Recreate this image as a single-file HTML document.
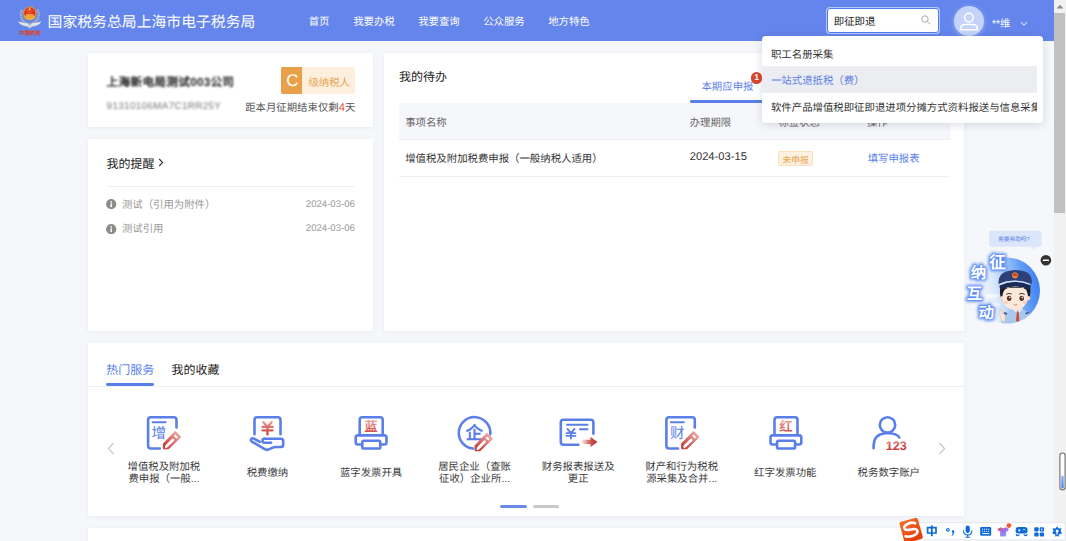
<!DOCTYPE html>
<html lang="zh-CN">
<head>
<meta charset="utf-8">
<title>国家税务总局上海市电子税务局</title>
<style>
*{box-sizing:border-box;margin:0;padding:0}
html,body{width:1066px;height:541px;overflow:hidden}
body{position:relative;text-rendering:geometricPrecision;background:#f5f7fa;font-family:"Liberation Sans",sans-serif;color:#333;font-size:10.4px;line-height:1}
.abs{position:absolute}
.t{position:absolute;white-space:nowrap;line-height:1}
#hdr{position:absolute;left:0;top:0;width:1053.6px;height:41px;background:#6485eb}
.card{position:absolute;background:#fff;border-radius:1px;box-shadow:0 1px 4px rgba(120,130,160,.10)}
#search{position:absolute;left:827px;top:7.5px;width:112.4px;height:25.6px;background:#fff;border:1.6px solid #4d7cf0;border-radius:3px;box-shadow:0 0 0 1px rgba(190,208,255,.9)}
#dd{position:absolute;left:761.6px;top:36.4px;width:281px;height:86.2px;background:#fff;border-radius:3.5px;box-shadow:0 2px 8px rgba(40,50,80,.16)}
#dd .it{position:absolute;left:0;width:275.6px;height:26.1px;line-height:32px;padding-left:9.4px;font-size:10.4px;color:#333;white-space:nowrap;overflow:hidden}
#sb{position:absolute;left:1053.6px;top:0;width:12.4px;height:541px;background:#f1f1f1}
#sb .thumb{position:absolute;left:0.4px;top:13px;width:11px;height:200px;background:#c1c1c1}
.svc{position:absolute;width:104px;text-align:center;font-size:10.4px;color:#3c3c3c;line-height:11.6px}

</style>
</head>
<body>
<div id="hdr">
<div class="t " style="left:47.6px;top:16.24px;font-size:14.85px;color:#fff;font-weight:500">国家税务总局上海市电子税务局</div>
<div class="t " style="left:308.7px;top:18.48px;font-size:10.4px;color:#fff;">首页</div>
<div class="t " style="left:353.2px;top:18.48px;font-size:10.4px;color:#fff;">我要办税</div>
<div class="t " style="left:418.2px;top:18.48px;font-size:10.4px;color:#fff;">我要查询</div>
<div class="t " style="left:483.2px;top:18.48px;font-size:10.4px;color:#fff;">公众服务</div>
<div class="t " style="left:548.2px;top:18.48px;font-size:10.4px;color:#fff;">地方特色</div>
<div id="search">
<div class="t " style="left:5.8px;top:9.78px;font-size:10.4px;color:#222;">即征即退</div>
<svg class="abs" style="left:91.6px;top:5.4px" width="12" height="12" viewBox="0 0 12 12"><circle cx="5" cy="5" r="3.2" fill="none" stroke="#a9adb6" stroke-width="1"/><path d="M7.4 7.4 L10 10" stroke="#a9adb6" stroke-width="1" stroke-linecap="round"/></svg>
</div>
<div class="abs" style="left:954.2px;top:6.2px;width:30px;height:30px;border-radius:50%;background:#c3d3f9;box-shadow:0 1px 5px rgba(225,235,255,.45)"></div>
<svg class="abs" style="left:954.2px;top:6.2px" width="30" height="30" viewBox="0 0 30 30"><circle cx="15" cy="11.6" r="4.3" fill="none" stroke="#fff" stroke-width="1.5"/><path d="M6.6 23.8 v-1.2 a4.2 4.2 0 0 1 4.2 -4.2 h8.4 a4.2 4.2 0 0 1 4.2 4.2 v1.2 z" fill="none" stroke="#fff" stroke-width="1.5" stroke-linejoin="round"/></svg>
<div class="t " style="left:992px;top:19.88px;font-size:10.4px;color:#fff;">**维</div>
<svg class="abs" style="left:1020px;top:20.5px" width="8" height="6" viewBox="0 0 8 6"><path d="M1 1.2 L4 4.2 L7 1.2" fill="none" stroke="#fff" stroke-width="1"/></svg>
</div>
<div class="card" id="c1" style="left:88.4px;top:53.2px;width:284.3px;height:74px">
<div class="t " style="left:18.2px;top:23.99px;font-size:11.7px;color:#222;font-weight:700;filter:blur(0.95px);letter-spacing:0.25px">上海新电局测试003公司</div>
<div class="t " style="left:18.2px;top:48.90px;font-size:9.8px;color:#777;filter:blur(0.9px);letter-spacing:0.38px">91310106MA7C1RR25Y</div>
<div class="abs" style="left:193.1px;top:14.1px;width:73.8px;height:26.5px;background:#fcefdd;border-radius:2px"></div>
<div class="abs" style="left:193.1px;top:14.1px;width:20.8px;height:26.5px;background:#e9a149;border-radius:2px 0 0 2px"></div>
<div class="t " style="left:197.8px;top:19.02px;font-size:17px;color:#fff;">C</div>
<div class="t " style="left:220px;top:25.38px;font-size:10.4px;color:#e8a34c;">级纳税人</div>
<div class="t " style="right:17.4px;top:49.68px;font-size:10.4px;color:#555;">距本月征期结束仅剩<span style="color:#e5533d;font-size:11.2px">4</span>天</div>
</div>
<div class="card" id="c2" style="left:88.4px;top:139px;width:284.3px;height:192px">
<div class="t " style="left:18.2px;top:19.20px;font-size:12px;color:#222;">我的提醒</div>
<svg class="abs" style="left:69.2px;top:19.2px" width="6" height="9" viewBox="0 0 6 9"><path d="M1.2 1 L4.6 4.5 L1.2 8" fill="none" stroke="#333" stroke-width="1.1"/></svg>
<div class="abs" style="left:18.2px;top:47px;width:248.3px;height:1px;background:#eef0f4"></div>
<svg class="abs" style="left:18px;top:60.39999999999999px" width="10.4" height="10.4" viewBox="0 0 10 10"><circle cx="5" cy="5" r="4.9" fill="#8c8c8c"/><circle cx="5" cy="2.8" r="0.8" fill="#fff"/><rect x="4.3" y="4.2" width="1.4" height="3.6" fill="#fff"/></svg>
<div class="t " style="left:33.5px;top:62.28px;font-size:10.4px;color:#999;">测试（引用为附件）</div>
<div class="t " style="right:17.8px;top:61.20px;font-size:9.6px;color:#999;">2024-03-06</div>
<svg class="abs" style="left:18px;top:84.49999999999999px" width="10.4" height="10.4" viewBox="0 0 10 10"><circle cx="5" cy="5" r="4.9" fill="#8c8c8c"/><circle cx="5" cy="2.8" r="0.8" fill="#fff"/><rect x="4.3" y="4.2" width="1.4" height="3.6" fill="#fff"/></svg>
<div class="t " style="left:33.5px;top:86.38px;font-size:10.4px;color:#999;">测试引用</div>
<div class="t " style="right:17.8px;top:85.30px;font-size:9.6px;color:#999;">2024-03-06</div>
</div>
<div class="card" id="c3" style="left:384.2px;top:53.2px;width:580.2px;height:277.8px">
<div class="t " style="left:14.8px;top:17.40px;font-size:12px;color:#222;">我的待办</div>
<div class="t " style="left:317.3px;top:30.08px;font-size:10.4px;color:#5b7fe8;">本期应申报</div>
<div class="abs" style="left:305.5px;top:47.3px;width:110px;height:2.9px;background:#5b7fe8;border-radius:1.3px"></div>
<div class="abs" style="left:366.6px;top:19px;width:11.6px;height:11.6px;border-radius:50%;background:#d8452f;color:#fff;font-size:8.6px;font-weight:700;text-align:center;line-height:11.6px">1</div>
<div class="abs" style="left:14.8px;top:50.1px;width:551px;height:36.1px;background:#f6f7fb"></div>
<div class="t " style="left:21px;top:66.28px;font-size:10.4px;color:#666;">事项名称</div>
<div class="t " style="left:305.5px;top:66.28px;font-size:10.4px;color:#666;">办理期限</div>
<div class="t " style="left:394.2px;top:66.28px;font-size:10.4px;color:#666;">标签状态</div>
<div class="t " style="left:482.8px;top:66.28px;font-size:10.4px;color:#666;">操作</div>
<div class="abs" style="left:14.8px;top:86.2px;width:551px;height:1px;background:#eef0f4"></div>
<div class="t " style="left:21px;top:101.68px;font-size:10.4px;color:#333;">增值税及附加税费申报（一般纳税人适用）</div>
<div class="t " style="left:305.5px;top:99.31px;font-size:11.2px;color:#333;">2024-03-15</div>
<div class="abs" style="left:394.2px;top:97.9px;width:34.3px;height:14.7px;background:#fdf1e1;border:1px solid #f9dfba;border-radius:1.5px"></div>
<div class="t " style="left:398.2px;top:102.56px;font-size:8.8px;color:#e9a04a;">未申报</div>
<div class="t " style="left:483.5px;top:102.18px;font-size:10.4px;color:#5b7fe8;">填写申报表</div>
<div class="abs" style="left:14.8px;top:123.3px;width:551px;height:1px;background:#eef0f4"></div>
</div>
<div class="card" id="c4" style="left:88.4px;top:343.4px;width:876px;height:172.4px">
<div class="t " style="left:17.799999999999997px;top:20.90px;font-size:12px;color:#5b7fe8;">热门服务</div>
<div class="t " style="left:83.1px;top:20.90px;font-size:12px;color:#222;">我的收藏</div>
<div class="abs" style="left:17.799999999999997px;top:39.400000000000034px;width:47.6px;height:2.8px;border-radius:1.4px;background:#5b7fe8"></div>
<div class="abs" style="left:0;top:42.400000000000034px;width:876px;height:1px;background:#eef0f4"></div>
<svg class="abs" style="left:19.0px;top:98.20000000000005px" width="8" height="13" viewBox="0 0 8 13"><path d="M6.6 1 L1.4 6.5 L6.6 12" fill="none" stroke="#c4c6cc" stroke-width="1.1"/></svg>
<svg class="abs" style="left:850.0px;top:98.20000000000005px" width="8" height="13" viewBox="0 0 8 13"><path d="M1.4 1 L6.6 6.5 L1.4 12" fill="none" stroke="#c4c6cc" stroke-width="1.1"/></svg>
<svg class="abs" style="left:0;top:56.60px" width="876" height="60" viewBox="88.4 400 876 60"><defs><linearGradient id="pg" gradientUnits="userSpaceOnUse" x1="17" y1="-17" x2="1" y2="-1"><stop offset="0" stop-color="#eeb4ae"/><stop offset="0.55" stop-color="#d66a66"/><stop offset="1" stop-color="#c23633"/></linearGradient><linearGradient id="rv" gradientUnits="userSpaceOnUse" x1="0" y1="420" x2="0" y2="450"><stop offset="0" stop-color="#e9a8a4"/><stop offset="0.25" stop-color="#d96c68"/><stop offset="0.6" stop-color="#c6312f"/><stop offset="1" stop-color="#c6393a"/></linearGradient><linearGradient id="ag" gradientUnits="userSpaceOnUse" x1="581" y1="0" x2="597" y2="0"><stop offset="0" stop-color="#e08a86" stop-opacity="0.12"/><stop offset="0.5" stop-color="#cf4d4a" stop-opacity="0.85"/><stop offset="1" stop-color="#b92524"/></linearGradient><linearGradient id="rn" gradientUnits="userSpaceOnUse" x1="0" y1="440" x2="0" y2="450"><stop offset="0" stop-color="#e39a96"/><stop offset="0.5" stop-color="#cf4b48"/><stop offset="1" stop-color="#c5383a"/></linearGradient></defs><g transform="translate(0,0)"><path d="M176.9 427.6 V419.9 Q176.9 417.2 174.2 417.2 H151.2 Q148.5 417.2 148.5 419.9 V445.8 Q148.5 448.5 151.2 448.5 H160.2" fill="none" stroke="#5b7fe8" stroke-width="2.6" stroke-linecap="round"/><path d="M153 422.2 H166" stroke="#5b7fe8" stroke-width="1.9" fill="none" stroke-linecap="round"/><text x="159.3" y="437.90" font-size="14.6" font-weight="500" fill="#5b7fe8" text-anchor="middle" font-family="Liberation Sans, sans-serif">增</text><g transform="translate(163.2,449.4)"><path d="M0.6 -0.6 L5.8 -0.6 L18.1 -12.5 L12.5 -18.1 L0.6 -5.8 Z" fill="url(#pg)" stroke="url(#pg)" stroke-width="1" stroke-linejoin="round"/><path d="M4.3 -3.7 L10.1 -9.5" stroke="#fff" stroke-width="2.8" fill="none" stroke-linecap="round"/><path d="M3.2 -2.4 L5 -4.4" stroke="#fff" stroke-width="2.2" fill="none" stroke-linecap="round"/><path d="M12.3 -13.6 L13.9 -12" stroke="#fff" stroke-width="2" fill="none" stroke-linecap="round"/></g></g><g transform="translate(0.3,0)"><path d="M254.6 434.2 V419.9 Q254.6 417.2 257.3 417.2 H277.9 Q280.6 417.2 280.6 419.9 V434.2" fill="none" stroke="#5b7fe8" stroke-width="2.6" stroke-linecap="round"/><path d="M263.52 422.2 L267.6 426.9 L271.68 422.2 M267.6 426.9 V434.6 M262.5 426.9 H272.70000000000005 M262.5 430.3 H272.70000000000005" fill="none" stroke="url(#rv)" stroke-width="2.3" stroke-linecap="round" stroke-linejoin="round"/><path d="M264.8 438.7 H281 Q283.3 438.7 283.3 441 V444.7 Q283.3 447 281 447 H275.6 Q274.2 447 272.8 447.6 L268.4 449.6 Q266.6 450.2 264.8 449.2 L252 441.6 Q250.4 440.4 251.4 439 Q252.4 437.8 254 438.6 L260 441.9" fill="none" stroke="#5b7fe8" stroke-width="2.6" stroke-linecap="round" stroke-linejoin="round"/><path d="M264.8 438.7 Q262.6 438.7 262.6 440.7 Q262.6 442.7 264.8 442.7 H271.2" fill="none" stroke="#5b7fe8" stroke-width="2.6" stroke-linecap="round" stroke-linejoin="round"/></g><g transform="translate(0.3,0)"><path d="M359.8 435.4 V419.7 Q359.8 417.2 362.3 417.2 H380.3 Q382.8 417.2 382.8 419.7 V435.4" fill="none" stroke="#5b7fe8" stroke-width="2.6"/><path d="M362.4 444.5 H358 Q355.8 444.5 355.8 442.3 V437.6 Q355.8 435.4 358 435.4 H384.4 Q386.6 435.4 386.6 437.6 V442.3 Q386.6 444.5 384.4 444.5 H380.4" fill="none" stroke="#5b7fe8" stroke-width="2.6"/><rect x="362.4" y="440.7" width="18" height="7.8" rx="1.6" fill="#fff" stroke="#5b7fe8" stroke-width="2.6"/><text x="371.2" y="431.31" font-size="13" font-weight="700" fill="url(#rv)" text-anchor="middle" font-family="Liberation Sans, sans-serif">蓝</text></g><path d="M490.7 434.4 A15.8 15.8 0 1 0 473.4 448.6" fill="none" stroke="#5b7fe8" stroke-width="2.5" stroke-linecap="round"/><text x="474.7" y="438.68" font-size="17.5" font-weight="700" fill="#5b7fe8" text-anchor="middle" font-family="Liberation Sans, sans-serif">企</text><g transform="translate(474.9,451.3)"><path d="M0.6 -0.6 L5.8 -0.6 L18.1 -12.5 L12.5 -18.1 L0.6 -5.8 Z" fill="url(#pg)" stroke="url(#pg)" stroke-width="1" stroke-linejoin="round"/><path d="M4.3 -3.7 L10.1 -9.5" stroke="#fff" stroke-width="2.8" fill="none" stroke-linecap="round"/><path d="M3.2 -2.4 L5 -4.4" stroke="#fff" stroke-width="2.2" fill="none" stroke-linecap="round"/><path d="M12.3 -13.6 L13.9 -12" stroke="#fff" stroke-width="2" fill="none" stroke-linecap="round"/></g><g transform="translate(0.4,0)"><path d="M593.4 433.8 V422.4 Q593.4 419.7 590.7 419.7 H563.5 Q560.8 419.7 560.8 422.4 V442 Q560.8 444.7 563.5 444.7 H578.4" fill="none" stroke="#5b7fe8" stroke-width="2.6" stroke-linecap="round"/><path d="M567 424.7 H587.6 M579.9 429.3 H587.6" stroke="#5b7fe8" stroke-width="1.9" fill="none" stroke-linecap="round"/><path d="M567.48 428.9 L571 433.1 L574.52 428.9 M571 433.1 V438.6 M566.6 433.1 H575.4 M566.6 435.9 H575.4" fill="none" stroke="#5b7fe8" stroke-width="1.9" stroke-linecap="round" stroke-linejoin="round"/><path d="M581.9 439.7 H590.4 V436.8 L597.4 441.9 L590.4 447.3 V444.1 H581.9 Z" fill="url(#ag)"/></g><g transform="translate(518.3,0)"><path d="M176.9 427.6 V419.9 Q176.9 417.2 174.2 417.2 H151.2 Q148.5 417.2 148.5 419.9 V445.8 Q148.5 448.5 151.2 448.5 H160.2" fill="none" stroke="#5b7fe8" stroke-width="2.6" stroke-linecap="round"/><path d="M153 422.2 H166" stroke="#5b7fe8" stroke-width="1.9" fill="none" stroke-linecap="round"/><text x="159.3" y="437.90" font-size="14.6" font-weight="500" fill="#5b7fe8" text-anchor="middle" font-family="Liberation Sans, sans-serif">财</text><g transform="translate(163.2,449.4)"><path d="M0.6 -0.6 L5.8 -0.6 L18.1 -12.5 L12.5 -18.1 L0.6 -5.8 Z" fill="url(#pg)" stroke="url(#pg)" stroke-width="1" stroke-linejoin="round"/><path d="M4.3 -3.7 L10.1 -9.5" stroke="#fff" stroke-width="2.8" fill="none" stroke-linecap="round"/><path d="M3.2 -2.4 L5 -4.4" stroke="#fff" stroke-width="2.2" fill="none" stroke-linecap="round"/><path d="M12.3 -13.6 L13.9 -12" stroke="#fff" stroke-width="2" fill="none" stroke-linecap="round"/></g></g><g transform="translate(415.1,0)"><path d="M359.8 435.4 V419.7 Q359.8 417.2 362.3 417.2 H380.3 Q382.8 417.2 382.8 419.7 V435.4" fill="none" stroke="#5b7fe8" stroke-width="2.6"/><path d="M362.4 444.5 H358 Q355.8 444.5 355.8 442.3 V437.6 Q355.8 435.4 358 435.4 H384.4 Q386.6 435.4 386.6 437.6 V442.3 Q386.6 444.5 384.4 444.5 H380.4" fill="none" stroke="#5b7fe8" stroke-width="2.6"/><rect x="362.4" y="440.7" width="18" height="7.8" rx="1.6" fill="#fff" stroke="#5b7fe8" stroke-width="2.6"/><text x="371.2" y="431.31" font-size="13" font-weight="700" fill="url(#rv)" text-anchor="middle" font-family="Liberation Sans, sans-serif">红</text></g><g transform="translate(0.4,0)"><circle cx="887.5" cy="424.9" r="7.7" fill="none" stroke="#5b7fe8" stroke-width="2.6"/><path d="M873.6 448.2 V446 Q873.9 434 885.5 433.3 H889 Q896.6 433.6 899.4 437.4" fill="none" stroke="#5b7fe8" stroke-width="2.6" stroke-linecap="round"/><text x="896.2" y="449.7" font-size="12.5" font-weight="700" fill="url(#rn)" text-anchor="middle" font-family="Liberation Sans, sans-serif">123</text></g></svg>
<div class="svc" style="left:23.50px;top:118.80px">增值税及附加税<br>费申报（一般...</div>
<div class="svc" style="left:127.10px;top:124.50px">税费缴纳</div>
<div class="svc" style="left:230.70px;top:124.50px">蓝字发票开具</div>
<div class="svc" style="left:334.20px;top:118.80px">居民企业（查账<br>征收）企业所...</div>
<div class="svc" style="left:437.80px;top:118.80px">财务报表报送及<br>更正</div>
<div class="svc" style="left:541.30px;top:118.80px">财产和行为税税<br>源采集及合并...</div>
<div class="svc" style="left:644.90px;top:124.50px">红字发票功能</div>
<div class="svc" style="left:748.40px;top:124.50px">税务数字账户</div>
<div class="abs" style="left:411.70000000000005px;top:161.5px;width:26.7px;height:3.3px;border-radius:1.7px;background:#6a8bea"></div>
<div class="abs" style="left:444.4px;top:161.5px;width:26.4px;height:3.3px;border-radius:1.7px;background:#c8c8c8"></div>
</div>
<div class="card" id="c5" style="left:88.4px;top:527.8px;width:876px;height:40px"></div>
<svg class="abs" style="left:14px;top:0" width="32" height="41" viewBox="14 0 32 41"><defs><radialGradient id="lgR" cx="0.45" cy="0.35" r="0.7"><stop offset="0" stop-color="#f0452e"/><stop offset="1" stop-color="#c81e1a"/></radialGradient><linearGradient id="lgS" x1="0" y1="0" x2="0" y2="1"><stop offset="0" stop-color="#ffffff"/><stop offset="1" stop-color="#b9c0cf"/></linearGradient></defs><path d="M22 9.8 Q19.8 15.4 22.4 20 Q25 23.6 29.8 24.2 Q34.6 23.6 37.2 20 Q39.8 15.4 37.6 9.8" fill="none" stroke="#aeb6c8" stroke-width="2.4" stroke-dasharray="1.6 0.7" opacity="0.95"/><path d="M22.6 11 Q21 15.4 23.2 19.2 Q25.6 22.4 29.8 22.8 Q34 22.4 36.4 19.2 Q38.6 15.4 37 11" fill="none" stroke="#8e97ab" stroke-width="0.8" opacity="0.8"/><path d="M18.2 21.6 Q24 23.4 27.4 23.2 L29.8 25.2 L32.2 23.2 Q35.6 23.4 41.4 21.6 Q38.6 26.2 32.6 26.6 L29.8 28.4 L27 26.6 Q21 26.2 18.2 21.6 Z" fill="url(#lgS)" stroke="#aab2c4" stroke-width="0.3"/><circle cx="29.8" cy="13" r="6.1" fill="url(#lgR)" stroke="#f09a2c" stroke-width="1"/><path d="M24.6 15.6 H35 V18.2 Q32.6 19.9 29.8 19.9 Q27 19.9 24.6 18.2 Z" fill="#f5b232"/><path d="M25.6 15.6 L26.6 14.2 H33 L34 15.6 Z" fill="#f8c646"/><path d="M25.4 17.1 H34.2" stroke="#e07a20" stroke-width="0.5"/><circle cx="29.6" cy="9.3" r="0.95" fill="#ffd95a"/><circle cx="27.2" cy="10.8" r="0.45" fill="#ffd95a"/><circle cx="32" cy="10.8" r="0.45" fill="#ffd95a"/><circle cx="28.2" cy="12.6" r="0.4" fill="#ffd95a"/><circle cx="31" cy="12.6" r="0.4" fill="#ffd95a"/><text x="30.1" y="35.2" font-size="5.5" font-weight="700" fill="#d6452d" text-anchor="middle" font-family="Liberation Serif, serif" letter-spacing="-0.1">中国税务</text></svg>
<div id="dd">
<div class="it" style="top:3.6px">职工名册采集</div>
<div class="it" style="top:30.1px;background:#ecedf1;color:#5b7fe8">一站式退抵税（费）</div>
<div class="it" style="top:56.8px">软件产品增值税即征即退进项分摊方式资料报送与信息采集</div>
</div>
<div id="sb"><div class="thumb"></div><svg class="abs" style="left:2px;top:3.6px" width="8" height="5" viewBox="0 0 8 5"><path d="M0.6 4.4 L4 0.8 L7.4 4.4 Z" fill="#8a8a8a"/></svg></div>
<svg class="abs" style="left:960px;top:225px;overflow:visible" width="96" height="105" viewBox="960 225 96 105"><defs><linearGradient id="mc" gradientUnits="userSpaceOnUse" x1="1041" y1="284" x2="972" y2="298"><stop offset="0" stop-color="#3d7df0"/><stop offset="0.22" stop-color="#5f9af4"/><stop offset="0.45" stop-color="#9cc3f9" stop-opacity="0.95"/><stop offset="0.68" stop-color="#cfe2fc" stop-opacity="0.6"/><stop offset="1" stop-color="#e6f0fe" stop-opacity="0"/></linearGradient><filter id="gb" x="-40%" y="-40%" width="180%" height="180%"><feGaussianBlur stdDeviation="1.5"/></filter><clipPath id="mclip"><circle cx="1007" cy="290.6" r="33"/></clipPath></defs><rect x="989.1" y="230.8" width="52.4" height="15.9" rx="2.6" fill="#dbe6fb"/><path d="M1031.2 246.5 L1033.9 250.3 L1035.2 246.5 Z" fill="#dbe6fb"/><text x="1013.9" y="241.2" font-size="5.7" fill="#5b7fe6" text-anchor="middle" font-family="Liberation Sans, sans-serif">需要帮助吗?</text><circle cx="1045.9" cy="260.3" r="5.3" fill="#333"/><rect x="1042.8" y="259.5" width="6.2" height="1.6" rx="0.6" fill="#fff"/><circle cx="1007" cy="290.6" r="33" fill="url(#mc)"/><g clip-path="url(#mclip)"><ellipse cx="992" cy="296" rx="7" ry="2.6" fill="#fff" opacity="0.55"/><ellipse cx="996" cy="304.6" rx="4" ry="1.8" fill="#fff" opacity="0.5"/><g transform="translate(0,1.8)"><path d="M1001 322 Q1002 310.5 1010 308.6 L1015 306 H1020 L1025 308.6 Q1031 310.5 1032 322 Z" fill="#a9c8ef"/><path d="M1012 306.6 L1016.6 311.4 L1017.6 306 Z M1023 306.6 L1018.6 311.4 L1017.6 306 Z" fill="#eef5fd"/><path d="M1016.8 309.6 H1018.6 L1019.3 318.5 L1017.7 321 L1016.1 318.5 Z" fill="#d8482f"/><path d="M1004 311 l3 1.2 M1028.6 310.6 l-3 1.4" stroke="#35508e" stroke-width="1.6"/><path d="M1001 318 Q999 312 1000 307.6 Q1000.6 306.6 1001.4 307.6 L1002.4 311.6 Q1005.6 312.4 1005.4 316 L1004.4 321 Z" fill="#fbe5d6" stroke="#c9a893" stroke-width="0.4"/></g></g><g transform="translate(0,1.5) translate(1015,296) scale(1.08) translate(-1015,-296)"><rect x="1014.4" y="303" width="6.4" height="5" fill="#f6d7c3"/><path d="M1002.6 291 Q1002 303.6 1010.4 306.4 Q1015 308 1019.6 306.4 Q1028 303.6 1027.6 291 Q1026 284.6 1015 284.6 Q1004 284.6 1002.6 291 Z" fill="#fde9dc"/><path d="M1001.4 287 Q1000.2 294 1003 299.2 Q1003 292 1005.6 288.6 L1010 286.2 L1021 286.2 L1025.4 288.8 Q1027.4 292.6 1027.4 298.6 Q1030 293 1029 287 Z" fill="#1d1d26"/><ellipse cx="1002.6" cy="296.6" rx="1.3" ry="2" fill="#fbdcca"/><ellipse cx="1027.8" cy="296.6" rx="1.3" ry="2" fill="#fbdcca"/><ellipse cx="1009.6" cy="296.8" rx="2.1" ry="2.5" fill="#5a3526"/><ellipse cx="1021.2" cy="296.8" rx="2.1" ry="2.5" fill="#5a3526"/><circle cx="1010.2" cy="296" r="0.75" fill="#fff"/><circle cx="1021.8" cy="296" r="0.75" fill="#fff"/><path d="M1006.8 293 Q1009.4 291.6 1012 292.8 M1018.8 292.8 Q1021.4 291.6 1024 293" stroke="#1d1d26" stroke-width="0.8" fill="none"/><ellipse cx="1006.6" cy="300.6" rx="1.9" ry="1.1" fill="#f7b9a6" opacity="0.7"/><ellipse cx="1024.2" cy="300.6" rx="1.9" ry="1.1" fill="#f7b9a6" opacity="0.7"/><path d="M1013.8 302.4 Q1015.4 303.8 1017 302.4" stroke="#b5553f" stroke-width="0.6" fill="none"/></g><path d="M998.6 284 Q997.6 274.6 1006 271.6 Q1015.4 268.6 1025 271.6 Q1033 274.6 1031.6 284 Q1024 280.6 1015 280.6 Q1006 280.6 998.6 284 Z" fill="#2d4178"/><path d="M999.6 285.4 Q1015 278.6 1030.6 285.4 Q1031 288.2 1029.4 289.6 Q1015 283.6 1000.8 289.6 Q999.2 288.2 999.6 285.4 Z" fill="#1c2a55"/><path d="M1000.4 284.2 Q1015 278 1029.8 284.2" stroke="#e8ecf4" stroke-width="1" fill="none"/><circle cx="1015" cy="275.4" r="2.7" fill="#d93a2a" stroke="#f0b13a" stroke-width="0.7"/><path d="M1013.6 276.4 h2.8 v0.9 h-2.8 z" fill="#f6c13f"/><text x="997.4" y="267.7" font-size="16.5" font-weight="700" text-anchor="middle" fill="#fff" stroke="#3f74f5" stroke-width="3.4" stroke-linejoin="round" opacity="0.8" filter="url(#gb)" font-family="Liberation Sans, sans-serif">征</text><text x="997.4" y="267.7" font-size="16.5" font-weight="700" text-anchor="middle" fill="#fff" stroke="#5b8bf8" stroke-width="1.3" stroke-linejoin="round" opacity="0.95" font-family="Liberation Sans, sans-serif">征</text><text x="997.4" y="267.7" font-size="16.5" font-weight="700" text-anchor="middle" fill="#fff" font-family="Liberation Sans, sans-serif">征</text><text x="978.6" y="278.1" font-size="15.5" font-weight="700" text-anchor="middle" fill="#fff" stroke="#3f74f5" stroke-width="3.4" stroke-linejoin="round" opacity="0.8" filter="url(#gb)" font-family="Liberation Sans, sans-serif">纳</text><text x="978.6" y="278.1" font-size="15.5" font-weight="700" text-anchor="middle" fill="#fff" stroke="#5b8bf8" stroke-width="1.3" stroke-linejoin="round" opacity="0.95" font-family="Liberation Sans, sans-serif">纳</text><text x="978.6" y="278.1" font-size="15.5" font-weight="700" text-anchor="middle" fill="#fff" font-family="Liberation Sans, sans-serif">纳</text><text x="974.6" y="299.1" font-size="15.5" font-weight="700" text-anchor="middle" fill="#fff" stroke="#3f74f5" stroke-width="3.4" stroke-linejoin="round" opacity="0.8" filter="url(#gb)" font-family="Liberation Sans, sans-serif">互</text><text x="974.6" y="299.1" font-size="15.5" font-weight="700" text-anchor="middle" fill="#fff" stroke="#5b8bf8" stroke-width="1.3" stroke-linejoin="round" opacity="0.95" font-family="Liberation Sans, sans-serif">互</text><text x="974.6" y="299.1" font-size="15.5" font-weight="700" text-anchor="middle" fill="#fff" font-family="Liberation Sans, sans-serif">互</text><text x="986.2" y="318.1" font-size="15.5" font-weight="700" text-anchor="middle" fill="#fff" stroke="#3f74f5" stroke-width="3.4" stroke-linejoin="round" opacity="0.8" filter="url(#gb)" font-family="Liberation Sans, sans-serif">动</text><text x="986.2" y="318.1" font-size="15.5" font-weight="700" text-anchor="middle" fill="#fff" stroke="#5b8bf8" stroke-width="1.3" stroke-linejoin="round" opacity="0.95" font-family="Liberation Sans, sans-serif">动</text><text x="986.2" y="318.1" font-size="15.5" font-weight="700" text-anchor="middle" fill="#fff" font-family="Liberation Sans, sans-serif">动</text></svg>
<svg class="abs" style="left:1058px;top:451px" width="8" height="41" viewBox="1058 451 8 41"><defs><linearGradient id="pl" x1="0" y1="0" x2="0" y2="1"><stop offset="0" stop-color="#8bb6fb"/><stop offset="1" stop-color="#3c7df2"/></linearGradient></defs><rect x="1059.9" y="453" width="5.2" height="36.8" rx="2.6" fill="#fff" stroke="#6b6b6b" stroke-width="1.1"/><rect x="1061.3" y="475.5" width="2.4" height="13" rx="1.2" fill="url(#pl)"/></svg>
<svg class="abs" style="left:890px;top:510px" width="176" height="31" viewBox="890 510 176 31"><defs><linearGradient id="sg" x1="0" y1="0" x2="0.4" y2="1"><stop offset="0" stop-color="#f4702d"/><stop offset="1" stop-color="#e53f0c"/></linearGradient><linearGradient id="tg" x1="0" y1="0" x2="0.7" y2="1"><stop offset="0" stop-color="#f2553a"/><stop offset="0.45" stop-color="#a66af0"/><stop offset="0.8" stop-color="#8a8bf8"/><stop offset="1" stop-color="#5fd0fb"/></linearGradient></defs><rect x="912" y="522.7" width="153.2" height="17.2" fill="#fff" stroke="#dfe5ee" stroke-width="0.9"/><g transform="rotate(-15.6 910.7 529)"><rect x="901.2" y="519.5" width="19" height="22" rx="2.2" fill="url(#sg)"/><path d="M916.6 524.6 Q914 522.6 909.6 523.2 Q904.6 524 904.8 526.8 Q905 529.2 910.6 529.4 Q916.6 529.6 916.6 532.6 Q916.6 535.6 910.6 536.2 Q906.4 536.4 903.8 534.6" fill="none" stroke="#fff" stroke-width="2.6" stroke-linecap="round"/></g><path d="M927.6 527.6 H936 V533 H927.6 Z" fill="none" stroke="#0d6bd9" stroke-width="1.7"/><path d="M931.8 525.4 V536.2" stroke="#0d6bd9" stroke-width="1.8"/><circle cx="947.9" cy="529.8" r="1.3" fill="none" stroke="#0d6bd9" stroke-width="1.1"/><circle cx="953" cy="531.6" r="1.25" fill="#0d6bd9"/><path d="M954.2 531.4 Q954.6 534.4 952 536 L951.6 535.4 Q953 534 952.6 532.6 Z" fill="#0d6bd9"/><rect x="965.6" y="525.6" width="4.2" height="7.4" rx="2.1" fill="#0d6bd9"/><path d="M963.5 530.8 Q963.5 535 967.7 535 Q971.9 535 971.9 530.8" fill="none" stroke="#0d6bd9" stroke-width="1.1" stroke-linecap="round"/><path d="M967.7 535 V537.2 M965.8 537.3 H969.6" stroke="#0d6bd9" stroke-width="1.1" stroke-linecap="round"/><rect x="980.2" y="526.9" width="11" height="8.9" rx="1.3" fill="#0d6bd9"/><path d="M982 529.2 H989.6 M982 531.3 H989.6" stroke="#fff" stroke-width="0.9" stroke-dasharray="1.1 0.9"/><path d="M982.4 533.6 H989.2" stroke="#fff" stroke-width="1"/><path d="M997.5 528.9 L1000.6 527.3 Q1003.2 529.2 1005.8 527.3 L1008.9 528.9 L1007.6 531.6 L1006.2 531 V536.6 H1000.2 V531 L998.8 531.6 Z" fill="url(#tg)"/><circle cx="1008.9" cy="525.6" r="2.4" fill="#fa5530"/><path d="M1018.6 527 H1024.6 Q1027.6 527 1027.6 530.4 Q1027.6 533.6 1024.6 533.6 H1018.6 Q1015.6 533.6 1015.6 530.4 Q1015.6 527 1018.6 527 Z" fill="#0d6bd9"/><path d="M1016.4 534.6 Q1017.4 536.4 1019 535 M1026.8 534.6 Q1025.8 536.4 1024.2 535" stroke="#0d6bd9" stroke-width="1.3" fill="none" stroke-linecap="round"/><path d="M1018 530.3 H1020.6 M1019.3 529 V531.6" stroke="#fff" stroke-width="0.8"/><path d="M1023 529.4 h1.6 l0.8 1" stroke="#fff" stroke-width="0.7" fill="none"/><rect x="1034.3" y="527.3" width="4.3" height="4.2" rx="1" fill="#0d6bd9"/><rect x="1039.7" y="527.3" width="4.3" height="4.2" rx="1" fill="#0d6bd9"/><rect x="1034.3" y="532.4" width="4.3" height="4.2" rx="1" fill="#0d6bd9"/><rect x="1039.7" y="532.4" width="4.3" height="4.2" rx="1" fill="#0d6bd9"/><path d="M1041.2 528.3 L1042.9 529.4 L1041.2 530.5 Z" fill="#fff"/><path d="M1057.1 526.3 L1058.6 528.4 L1061.6 528.2 L1060.6 530.9 L1062.2 533.4 L1059.4 534 L1058.4 536.9 L1057.1 535.6 L1055.8 536.9 L1054.8 534 L1052 533.4 L1053.6 530.9 L1052.6 528.2 L1055.6 528.4 Z" fill="#0d6bd9"/><circle cx="1057.1" cy="531" r="1.5" fill="#fff"/><rect x="1056.5" y="532.2" width="1.2" height="2.4" fill="#fff"/></svg>
</body>
</html>
